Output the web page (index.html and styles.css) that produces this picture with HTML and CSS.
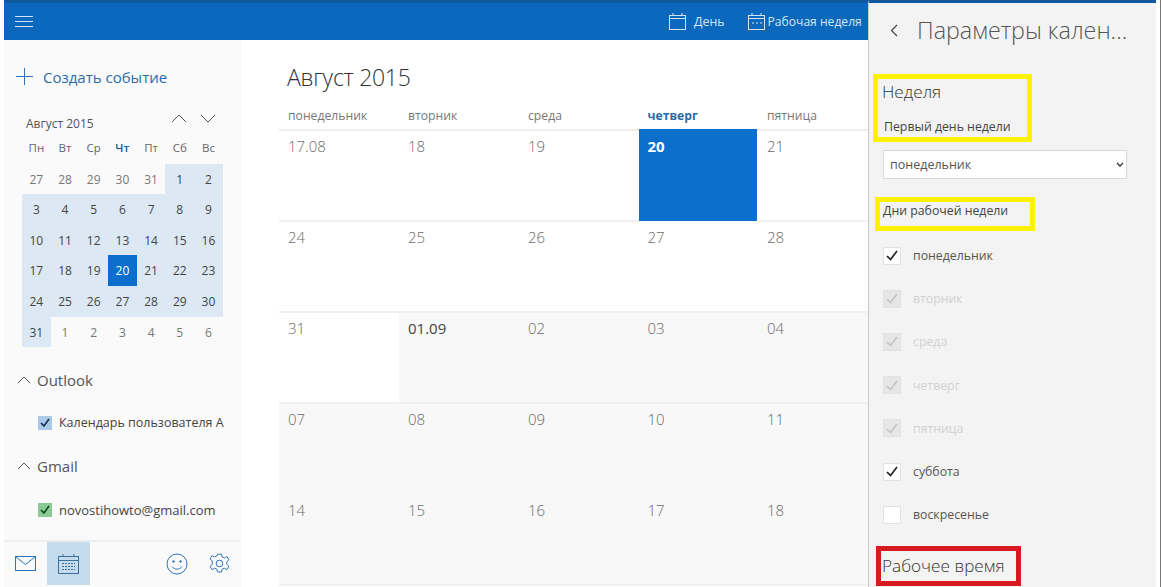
FILE: index.html
```html
<!DOCTYPE html>
<html lang="ru">

<head>
  <meta charset="utf-8">
  <title>Календарь</title>
  <link rel="stylesheet" href="styles.css">
</head>

<body>
  <div class="app">
    <div class="main">
      <header class="topbar">
        <svg class="burger" width="18" height="13" viewBox="0 0 18 13"><path d="M0 1.5h18M0 6.5h18M0 11.5h18" stroke="#cfe4f6" fill="none"/></svg>
        <div class="view view-day">
          <svg width="17" height="17" viewBox="0 0 17 17" fill="none" stroke="#cfe4f6"><rect x="0.5" y="2.5" width="16" height="14"/><path d="M0.5 5.5h16M4 0v3M13 0v3"/></svg>
          <span>День</span>
        </div>
        <div class="view view-week">
          <svg width="17" height="17" viewBox="0 0 17 17" fill="none" stroke="#cfe4f6"><rect x="0.5" y="2.5" width="16" height="14"/><path d="M0.5 5.5h16M4 0v3M13 0v3M4 10h2M8 10h2M12 10h2"/></svg>
          <span>Рабочая неделя</span>
        </div>
      </header>
      <div class="content">
        <aside class="sidebar">
          <div class="new-event">
            <svg width="17" height="17" viewBox="0 0 17 17"><path d="M8.5 0v17M0 8.5h17" stroke="#2e75b8" fill="none"/></svg>
            <span>Создать событие</span>
          </div>
          <div class="mini-head">
            <span>Август 2015</span>
            <div class="mini-arrows">
              <svg width="16" height="9" viewBox="0 0 16 9"><path d="M1 8l7-7 7 7" stroke="#555" fill="none"/></svg>
              <svg width="16" height="9" viewBox="0 0 16 9"><path d="M1 1l7 7 7-7" stroke="#555" fill="none"/></svg>
            </div>
          </div>
          <div class="mini-cal">
            <div class="dow">Пн</div><div class="dow">Вт</div><div class="dow">Ср</div><div class="dow today-dow">Чт</div><div class="dow">Пт</div><div class="dow">Сб</div><div class="dow">Вс</div>
            <div>27</div><div>28</div><div>29</div><div>30</div><div>31</div><div class="cur">1</div><div class="cur">2</div>
            <div class="cur">3</div><div class="cur">4</div><div class="cur">5</div><div class="cur">6</div><div class="cur">7</div><div class="cur">8</div><div class="cur">9</div>
            <div class="cur">10</div><div class="cur">11</div><div class="cur">12</div><div class="cur">13</div><div class="cur">14</div><div class="cur">15</div><div class="cur">16</div>
            <div class="cur">17</div><div class="cur">18</div><div class="cur">19</div><div class="today">20</div><div class="cur">21</div><div class="cur">22</div><div class="cur">23</div>
            <div class="cur">24</div><div class="cur">25</div><div class="cur">26</div><div class="cur">27</div><div class="cur">28</div><div class="cur">29</div><div class="cur">30</div>
            <div class="cur">31</div><div>1</div><div>2</div><div>3</div><div>4</div><div>5</div><div>6</div>
          </div>
          <div class="acc acc-outlook">
            <svg width="14" height="8" viewBox="0 0 14 8"><path d="M1 7l6-6 6 6" stroke="#555" fill="none"/></svg>
            <span>Outlook</span>
          </div>
          <div class="cal-item cal-outlook">
            <span class="cal-box blue"><svg width="10" height="9" viewBox="0 0 10 9"><path d="M1 5l3 3 5-7" stroke="#10305a" stroke-width="1.6" fill="none"/></svg></span>
            <span class="cal-name">Календарь пользователя А</span>
          </div>
          <div class="acc acc-gmail">
            <svg width="14" height="8" viewBox="0 0 14 8"><path d="M1 7l6-6 6 6" stroke="#555" fill="none"/></svg>
            <span>Gmail</span>
          </div>
          <div class="cal-item cal-gmail">
            <span class="cal-box green"><svg width="10" height="9" viewBox="0 0 10 9"><path d="M1 5l3 3 5-7" stroke="#0f4a1c" stroke-width="1.6" fill="none"/></svg></span>
            <span class="cal-name">novostihowto@gmail.com</span>
          </div>
          <div class="sidebar-foot">
            <div class="foot-btn">
              <svg width="21" height="15" viewBox="0 0 21 15" fill="none" stroke="#2e75b8"><rect x="0.5" y="0.5" width="20" height="14"/><path d="M0.5 0.5l10 8 10-8"/></svg>
            </div>
            <div class="foot-btn active">
              <svg width="21" height="20" viewBox="0 0 21 20" fill="none" stroke="#3a6f9e"><rect x="0.5" y="2.5" width="20" height="17"/><path d="M0.5 6.5h20M5 0v3M16 0v3"/><path d="M4 9.5h13M4 12.5h13M4 15.5h13" stroke-dasharray="2 1"/></svg>
            </div>
            <div class="foot-spacer"></div>
            <div class="foot-btn">
              <svg width="22" height="22" viewBox="0 0 22 22" fill="none" stroke="#2e75b8"><circle cx="11" cy="11" r="10"/><circle cx="7.5" cy="8.5" r="0.8" fill="#2e75b8"/><circle cx="14.5" cy="8.5" r="0.8" fill="#2e75b8"/><path d="M6 13.5c2.5 3.5 7.5 3.5 10 0"/></svg>
            </div>
            <div class="foot-btn">
              <svg width="21" height="21" viewBox="0 0 21 21" fill="none" stroke="#2e75b8"><path d="M8.5 1h4l.6 2.8 2.3 1 2.5-1.5 2 3.4-2.1 1.9v2.6l2.1 1.9-2 3.4-2.5-1.5-2.3 1-.6 2.8h-4l-.6-2.8-2.3-1-2.5 1.5-2-3.4 2.1-1.9V7.6L1 5.7l2-3.4 2.5 1.5 2.3-1z" transform="translate(0 0.2)"/><circle cx="10.5" cy="10.5" r="3.3"/></svg>
            </div>
          </div>
        </aside>
        <main class="calendar">
          <h1 class="cal-title">Август 2015</h1>
          <div class="week-head">
            <div>понедельник</div><div>вторник</div><div>среда</div><div class="now">четверг</div><div>пятница</div>
          </div>
          <div class="grid">
            <div class="day">17.08</div><div class="day">18</div><div class="day">19</div><div class="day day-today">20</div><div class="day">21</div>
            <div class="day">24</div><div class="day">25</div><div class="day">26</div><div class="day">27</div><div class="day">28</div>
            <div class="day">31</div><div class="day next first">01.09</div><div class="day next">02</div><div class="day next">03</div><div class="day next">04</div>
            <div class="day next open">07</div><div class="day next open">08</div><div class="day next open">09</div><div class="day next open">10</div><div class="day next open">11</div>
            <div class="day next">14</div><div class="day next">15</div><div class="day next">16</div><div class="day next">17</div><div class="day next">18</div>
          </div>
        </main>
      </div>
    </div>
    <section class="panel">
      <div class="panel-head">
        <svg width="8" height="13" viewBox="0 0 8 13"><path d="M7 1L1.5 6.5 7 12" stroke="#444" stroke-width="1.2" fill="none"/></svg>
        <span>Параметры кален...</span>
      </div>
      <div class="mark mark-week">
        <div class="h2">Неделя</div>
        <div class="label">Первый день недели</div>
      </div>
      <div class="select">
        <span>понедельник</span>
        <svg width="8" height="5" viewBox="0 0 8 5"><path d="M1 1l3 3 3-3" stroke="#333" stroke-width="1.3" fill="none"/></svg>
      </div>
      <div class="mark mark-days">
        <div class="label">Дни рабочей недели</div>
      </div>
      <div class="checks">
        <div class="check"><span class="box"><svg width="12" height="11" viewBox="0 0 12 11"><path d="M1 6l3.5 3.5L11 1" stroke="#222" stroke-width="1.7" fill="none"/></svg></span>понедельник</div>
        <div class="check off"><span class="box"><svg width="12" height="11" viewBox="0 0 12 11"><path d="M1 6l3.5 3.5L11 1" stroke="#c4c4c4" stroke-width="1.5" fill="none"/></svg></span>вторник</div>
        <div class="check off"><span class="box"><svg width="12" height="11" viewBox="0 0 12 11"><path d="M1 6l3.5 3.5L11 1" stroke="#c4c4c4" stroke-width="1.5" fill="none"/></svg></span>среда</div>
        <div class="check off"><span class="box"><svg width="12" height="11" viewBox="0 0 12 11"><path d="M1 6l3.5 3.5L11 1" stroke="#c4c4c4" stroke-width="1.5" fill="none"/></svg></span>четверг</div>
        <div class="check off"><span class="box"><svg width="12" height="11" viewBox="0 0 12 11"><path d="M1 6l3.5 3.5L11 1" stroke="#c4c4c4" stroke-width="1.5" fill="none"/></svg></span>пятница</div>
        <div class="check"><span class="box"><svg width="12" height="11" viewBox="0 0 12 11"><path d="M1 6l3.5 3.5L11 1" stroke="#222" stroke-width="1.7" fill="none"/></svg></span>суббота</div>
        <div class="check"><span class="box"></span>воскресенье</div>
      </div>
      <div class="mark mark-time">
        <div class="h2">Рабочее время</div>
      </div>
    </section>
  </div>
</body>

</html>
```

FILE: styles.css
```css
html, body {
  margin: 0;
  height: 100%;
  overflow: hidden;
  background: #fff;
}

body {
  font-family: "Open Sans", "Noto Sans", sans-serif;
  color: #444;
}

.app {
  display: flex;
  height: 587px;
  padding-left: 4px;
  box-sizing: border-box;
  border-right: 1px solid #777;
}

.main {
  width: 864px;
  display: flex;
  flex-direction: column;
}

.topbar {
  height: 37px;
  flex: none;
  background: #0c68bd;
  border-top: 3px solid #0f5a9f;
  display: flex;
  align-items: center;
  color: #d4e6f6;
  font-size: 12.4px;
  white-space: nowrap;
}

.burger {
  margin-left: 11px;
  margin-right: 636px;
}

.view {
  display: flex;
  align-items: center;
}

.view-day {
  gap: 8px;
  margin-right: 23px;
}

.view-week {
  gap: 3px;
}

.view-week span {
  font-size: 12.1px;
}

.content {
  flex: 1;
  display: flex;
  min-height: 0;
}

.sidebar {
  width: 237px;
  flex: none;
  background: #fafafa;
  display: flex;
  flex-direction: column;
}

.new-event {
  display: flex;
  align-items: center;
  gap: 10px;
  margin: 28px 0 0 12px;
  height: 17px;
  font-size: 15px;
  color: #2a6ca8;
}

.mini-head {
  display: flex;
  justify-content: space-between;
  align-items: center;
  margin: 28px 0 0 22px;
  width: 190px;
  height: 20px;
  font-size: 12px;
  color: #555;
}

.mini-arrows {
  display: flex;
  gap: 13px;
  margin-top: -10px;
}

.mini-cal {
  display: grid;
  grid-template-columns: repeat(7, 28.7px);
  grid-auto-rows: 30.6px;
  margin: 0 0 0 18px;
  font-size: 12px;
  color: #777;
  text-align: center;
  line-height: 32.6px;
}

.mini-cal .dow {
  font-size: 11.5px;
  line-height: 30.6px;
  color: #666;
}

.mini-cal .today-dow {
  color: #1c5f99;
  font-weight: 600;
}

.mini-cal .cur {
  background: #dce9f5;
  color: #444;
}

.mini-cal .today {
  background: #0c6fce;
  color: #fff;
}

.acc {
  display: flex;
  align-items: center;
  gap: 6px;
  margin-left: 13px;
  height: 21px;
  font-size: 15px;
  color: #555;
}

.acc-outlook {
  margin-top: 22px;
}

.acc-gmail {
  margin-top: 24px;
}

.cal-item {
  display: flex;
  align-items: center;
  gap: 7px;
  margin: 24px 0 0 34px;
  height: 17px;
  font-size: 12.5px;
  color: #444;
  white-space: nowrap;
}

.cal-gmail {
  margin-top: 25px;
  font-size: 13px;
}

.cal-box {
  width: 14px;
  height: 14px;
  display: flex;
  align-items: center;
  justify-content: center;
}

.cal-box.blue {
  background: #a9c9e6;
}

.cal-box.green {
  background: #8ccb96;
}

.sidebar-foot {
  margin-top: auto;
  height: 43px;
  margin-bottom: 2px;
  border-top: 2px solid #eeeeee;
  display: flex;
}

.foot-btn {
  width: 43px;
  display: flex;
  align-items: center;
  justify-content: center;
}

.foot-btn.active {
  background: #c5dcef;
}

.foot-spacer {
  flex: 1;
}

.calendar {
  flex: 1;
  padding-left: 38px;
  min-width: 0;
}

.cal-title {
  margin: 19px 0 0 8px;
  height: 36px;
  font-size: 23px;
  letter-spacing: -0.3px;
  line-height: 36px;
  font-weight: 300;
  color: #333;
}

.week-head {
  display: grid;
  grid-template-columns: 120px 120px 119.5px 119.5px 110px;
  margin-top: 12px;
  height: 22px;
  font-size: 12.2px;
  line-height: 18px;
  color: #777;
  border-bottom: 2px solid #eeeeee;
}

.week-head div {
  padding-left: 9px;
}

.week-head .now {
  color: #2a6ca8;
  font-weight: 700;
}

.grid {
  display: grid;
  grid-template-columns: 120px 120px 119.5px 119.5px 110px;
  grid-auto-rows: 91px;
}

.day {
  padding: 5px 0 0 9px;
  font-size: 15px;
  line-height: 20px;
  color: #6a6a6a;
  font-weight: 300;
  border-bottom: 2px solid #f0f0f0;
  box-sizing: border-box;
}

.day.next {
  background: #f8f8f8;
}

.day.open {
  border-bottom-color: #f8f8f8;
}

.day.first {
  color: #444;
  font-weight: 400;
}

.day-today {
  background: #0c6fce;
  color: #fff;
  font-weight: 700;
  margin: -2px 1px 1px 0;
  padding-top: 7px;
  border-bottom: 0;
}

.panel {
  width: 288px;
  flex: none;
  background: #f3f3f3;
  border-left: 1px solid #c9c9c9;
  border-top: 3px solid #0f5a9f;
  padding-left: 14px;
  box-sizing: border-box;
}

.panel-head {
  display: flex;
  align-items: center;
  gap: 19px;
  height: 52px;
  padding-top: 2px;
  box-sizing: border-box;
  margin-left: 7px;
  font-size: 23.3px;
  font-weight: 300;
  color: #555;
  white-space: nowrap;
}

.mark {
  box-sizing: border-box;
}

.mark-week {
  width: 159px;
  height: 68px;
  margin: 19px 0 0 -10px;
  border: 5px solid #fff200;
  padding-left: 4px;
}

.h2 {
  font-size: 17.2px;
  font-weight: 300;
  line-height: 24px;
  color: #333;
}

.mark-week .h2 {
  margin-top: 1px;
}

.label {
  font-size: 12.3px;
  line-height: 18px;
  color: #444;
}

.mark-week .label {
  margin-top: 14px;
  padding-left: 2px;
}

.select {
  width: 244px;
  height: 29px;
  box-sizing: border-box;
  margin-top: 8px;
  background: #fff;
  border: 1px solid #d9d9d9;
  display: flex;
  align-items: center;
  justify-content: space-between;
  padding: 0 2px 0 6px;
  font-size: 12.5px;
  color: #555;
}

.mark-days {
  width: 160px;
  height: 34px;
  margin: 18px 0 0 -8px;
  border: 5px solid #fff200;
  padding-left: 3px;
}

.checks {
  margin-top: 3px;
}

.check {
  display: flex;
  align-items: center;
  height: 43.2px;
  gap: 12px;
  font-size: 12.3px;
  color: #555;
}

.box {
  width: 18px;
  height: 18px;
  box-sizing: border-box;
  background: #fff;
  border: 1px solid #e2e2e2;
  display: flex;
  align-items: center;
  justify-content: center;
}

.check.off {
  color: #d2d2d2;
}

.check.off .box {
  background: #e6e6e6;
}

.mark-time {
  width: 145px;
  height: 40px;
  margin: 9.4px 0 0 -7px;
  border: 5px solid #d71920;
  padding-left: 1px;
}

.mark-time .h2 {
  line-height: 30px;
}
```
